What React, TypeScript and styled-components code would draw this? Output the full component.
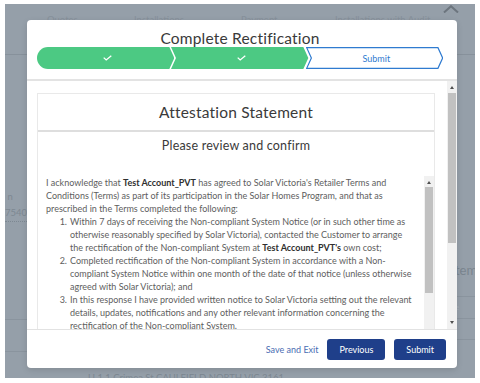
import React from "react";
import styled, { createGlobalStyle } from "styled-components";

const Global = createGlobalStyle`
  html, body { margin: 0; padding: 0; background: #fff; }
  body { font-family: Lato, "Liberation Sans", sans-serif; }
  * { box-sizing: border-box; }
`;

const Frame = styled.div`
  width: 480px;
  height: 383px;
  padding: 4px 5px 5px 5px;
  background: #fff;
  overflow: hidden;
`;

const Screen = styled.div`
  position: relative;
  width: 470px;
  height: 374px;
  background: #959fa9;
  overflow: hidden;
  display: flex;
  flex-direction: column;
`;

/* ---------- background page (dimmed) ---------- */
const TabRow = styled.div`
  display: grid;
  grid-template-columns: 87px 107px 94px 108px 32px;
  padding-left: 42px;
  height: 50px;
  flex: none;
`;

const Tab = styled.div`
  padding-top: 10px;
  font-size: 9.5px;
  line-height: 12px;
  color: #87919b;
  white-space: nowrap;
`;

const CollapseIcon = styled.svg`
  display: block;
  margin-top: 1px;
`;

const PageRule = styled.div`
  height: 1px;
  flex: none;
  background: #87919b;
`;

const Middle = styled.div`
  flex: 1;
  display: flex;
  justify-content: space-between;
`;

const LeftCol = styled.div`
  width: 22px;
  padding-top: 133px;
  display: flex;
  flex-direction: column;
  font-size: 9.5px;
  line-height: 17px;
  color: #7d8892;
`;

const FieldValue = styled.div`
  border-bottom: 1px dotted #7d8892;
  line-height: 16px;
`;

const LeftRule = styled.div<{ $gap: number }>`
  margin-top: ${(p) => p.$gap}px;
  height: 1px;
  background: #8a949e;
`;

const RightCol = styled.div`
  width: 60px;
  padding-top: 207px;
  display: flex;
  flex-direction: column;
`;

const RightHeading = styled.div`
  padding-left: 21px;
  font-size: 13px;
  line-height: 16px;
  color: #7a858f;
  white-space: nowrap;
`;

const RightRow = styled.div<{ $h: number }>`
  height: ${(p) => p.$h}px;
  border-bottom: 1px solid #8a949e;
  padding-left: 40px;
  font-size: 8px;
  line-height: 20px;
  color: #a3adb6;
`;

const AddressRow = styled.div`
  height: 7px;
  flex: none;
  padding-left: 83px;
  font-size: 9.5px;
  line-height: 13px;
  color: #7d8892;
  white-space: nowrap;
`;

/* ---------- modal ---------- */
const Modal = styled.div`
  position: absolute;
  left: 22px;
  top: 16px;
  width: 430px;
  height: 348px;
  background: #fff;
  border-radius: 4px;
  display: flex;
  flex-direction: column;
  overflow: hidden;
  box-shadow: 0 2px 6px rgba(0, 0, 0, 0.12);
`;

const Header = styled.div`
  height: 61px;
  flex: none;
  padding: 10px 14px 0 10px;
  border-bottom: 2px solid #e3e3e3;
`;

const Title = styled.div`
  text-align: center;
  font-size: 15.5px;
  line-height: 17px;
  color: #3a3a3a;
  letter-spacing: 0.2px;
`;

const Progress = styled.div`
  display: flex;
  height: 22px;
`;

const Step = styled.div<{ $first?: boolean }>`
  position: relative;
  flex: 1;
  height: 22px;
  margin-left: ${(p) => (p.$first ? 0 : -3)}px;
  display: flex;
  align-items: center;
  justify-content: center;
`;

const StepShape = styled.svg`
  position: absolute;
  inset: 0;
  width: 100%;
  height: 100%;
`;

const StepLabel = styled.span`
  position: relative;
  font-size: 9px;
  color: #2f7bd0;
  padding-left: 4px;
`;

const Check = styled.svg`
  position: relative;
  margin-left: 4px;
`;

const Body = styled.div`
  flex: 1;
  min-height: 0;
  display: flex;
`;

const BodyContent = styled.div`
  flex: 1;
  padding: 12px 12px 0 10px;
  overflow: hidden;
`;

const Scrollbar = styled.div`
  width: 10px;
  flex: none;
  background: #f1f1f1;
  display: flex;
  flex-direction: column;
  align-items: center;
`;

const ArrowUp = styled.div`
  margin-top: 5px;
  width: 0;
  height: 0;
  border-left: 2.5px solid transparent;
  border-right: 2.5px solid transparent;
  border-bottom: 3px solid #505050;
`;

const ArrowDown = styled.div`
  margin-bottom: 5px;
  width: 0;
  height: 0;
  border-left: 2.5px solid transparent;
  border-right: 2.5px solid transparent;
  border-top: 3px solid #505050;
`;

const Thumb = styled.div<{ $top: number; $size: number }>`
  margin-top: ${(p) => p.$top}px;
  width: 8px;
  height: ${(p) => p.$size}px;
  background: #c1c1c1;
  flex: none;
`;

const Spacer = styled.div`
  flex: 1;
`;

const Card = styled.div`
  border: 1px solid #e9e9e9;
  border-bottom: none;
  background: #fff;
`;

const CardTitle = styled.div`
  height: 38px;
  line-height: 37px;
  text-align: center;
  font-size: 15.5px;
  color: #3a3a3a;
  border-bottom: 2px solid #dedede;
  letter-spacing: 0.2px;
`;

const SubTitle = styled.div`
  padding-top: 6px;
  line-height: 16px;
  text-align: center;
  font-size: 12.5px;
  color: #3a3a3a;
  margin-bottom: 22px;
  letter-spacing: 0.2px;
`;

const TextBox = styled.div`
  display: flex;
  height: 170px;
`;

const TextBody = styled.div`
  flex: 1;
  padding: 0 8px 0 8px;
  font-size: 9px;
  line-height: 13px;
  color: #5e5e5e;
  white-space: nowrap;
`;

const Strong = styled.b`
  font-weight: 700;
  color: #2f2f2f;
`;

const Item = styled.div`
  display: grid;
  grid-template-columns: 24px 1fr;
`;

const ItemNum = styled.span`
  text-align: right;
  padding-right: 3px;
`;

const Footer = styled.div`
  height: 39px;
  flex: none;
  border-top: 1px solid #e2e2e2;
  display: flex;
  align-items: center;
  justify-content: flex-end;
  padding: 1px 11px 0 0;
  gap: 9px;
`;

const LinkButton = styled.span`
  font-size: 9px;
  color: #4a6db3;
`;

const Button = styled.div`
  height: 21px;
  padding: 0 12px;
  border-radius: 3px;
  background: #1f3f8a;
  color: #fff;
  font-size: 9px;
  line-height: 21px;
`;

const CheckIcon = () => (
  <Check width="9" height="6" viewBox="0 0 9 6">
    <polyline points="0.7,2.6 3.2,5 8.3,0.7" fill="none" stroke="#fff" strokeWidth="1.3" />
  </Check>
);

export default function App() {
  return (
    <>
      <Global />
      <Frame>
        <Screen>
          <TabRow>
            <Tab>Quotes</Tab>
            <Tab>Installations</Tab>
            <Tab>Payment</Tab>
            <Tab>Installations with Audit</Tab>
            <CollapseIcon width="16" height="8" viewBox="0 0 16 8">
              <polyline points="1,7.5 8,1.2 15,7.5" fill="none" stroke="#6c757e" strokeWidth="2" />
            </CollapseIcon>
          </TabRow>
          <PageRule />
          <Middle>
            <LeftCol>
              <div>&nbsp;n</div>
              <FieldValue>7540</FieldValue>
              <LeftRule $gap={97} />
              <LeftRule $gap={31} />
            </LeftCol>
            <RightCol>
              <RightHeading>System</RightHeading>
              <RightRow $h={19} />
              <RightRow $h={22}>e</RightRow>
              <RightRow $h={21} />
            </RightCol>
          </Middle>
          <AddressRow>U 1 1 Crimea St CAULFIELD NORTH VIC 3161</AddressRow>

          <Modal>
            <Header>
              <Title>Complete Rectification</Title>
              <Progress>
                <Step $first>
                  <StepShape viewBox="0 0 138 22" preserveAspectRatio="none">
                    <path d="M11 0 H133 L138 11 L133 22 H11 A11 11 0 0 1 11 0 Z" fill="#4cc983" />
                  </StepShape>
                  <CheckIcon />
                </Step>
                <Step>
                  <StepShape viewBox="0 0 138 22" preserveAspectRatio="none">
                    <path d="M0 0 H133 L138 11 L133 22 H0 L5 11 Z" fill="#4cc983" />
                  </StepShape>
                  <CheckIcon />
                </Step>
                <Step>
                  <StepShape viewBox="0 0 138 22" preserveAspectRatio="none">
                    <path
                      d="M0.7 0.7 H132.6 L137.3 11 L132.6 21.3 H0.7 L5.4 11 Z"
                      fill="#fff"
                      stroke="#2f7bd0"
                      strokeWidth="1.2"
                    />
                  </StepShape>
                  <StepLabel>Submit</StepLabel>
                </Step>
              </Progress>
            </Header>

            <Body>
              <BodyContent>
                <Card>
                  <CardTitle>Attestation Statement</CardTitle>
                  <SubTitle>Please review and confirm</SubTitle>
                  <TextBox>
                    <TextBody>
                      <div>
                        I acknowledge that <Strong>Test Account_PVT</Strong> has agreed to Solar Victoria's Retailer Terms and
                      </div>
                      <div>Conditions (Terms) as part of its participation in the Solar Homes Program, and that as</div>
                      <div>prescribed in the Terms completed the following:</div>
                      <Item>
                        <ItemNum>1.</ItemNum>
                        <div>
                          <div>Within 7 days of receiving the Non-compliant System Notice (or in such other time as</div>
                          <div>otherwise reasonably specified by Solar Victoria), contacted the Customer to arrange</div>
                          <div>
                            the rectification of the Non-compliant System at <Strong>Test Account_PVT's</Strong> own cost;
                          </div>
                        </div>
                      </Item>
                      <Item>
                        <ItemNum>2.</ItemNum>
                        <div>
                          <div>Completed rectification of the Non-compliant System in accordance with a Non-</div>
                          <div>compliant System Notice within one month of the date of that notice (unless otherwise</div>
                          <div>agreed with Solar Victoria); and</div>
                        </div>
                      </Item>
                      <Item>
                        <ItemNum>3.</ItemNum>
                        <div>
                          <div>In this response I have provided written notice to Solar Victoria setting out the relevant</div>
                          <div>details, updates, notifications and any other relevant information concerning the</div>
                          <div>rectification of the Non-compliant System.</div>
                        </div>
                      </Item>
                    </TextBody>
                    <Scrollbar>
                      <ArrowUp />
                      <Thumb $top={3} $size={106} />
                      <Spacer />
                    </Scrollbar>
                  </TextBox>
                </Card>
              </BodyContent>
              <Scrollbar>
                <ArrowUp />
                <Thumb $top={4} $size={150} />
                <Spacer />
                <ArrowDown />
              </Scrollbar>
            </Body>

            <Footer>
              <LinkButton>Save and Exit</LinkButton>
              <Button>Previous</Button>
              <Button>Submit</Button>
            </Footer>
          </Modal>
        </Screen>
      </Frame>
    </>
  );
}
